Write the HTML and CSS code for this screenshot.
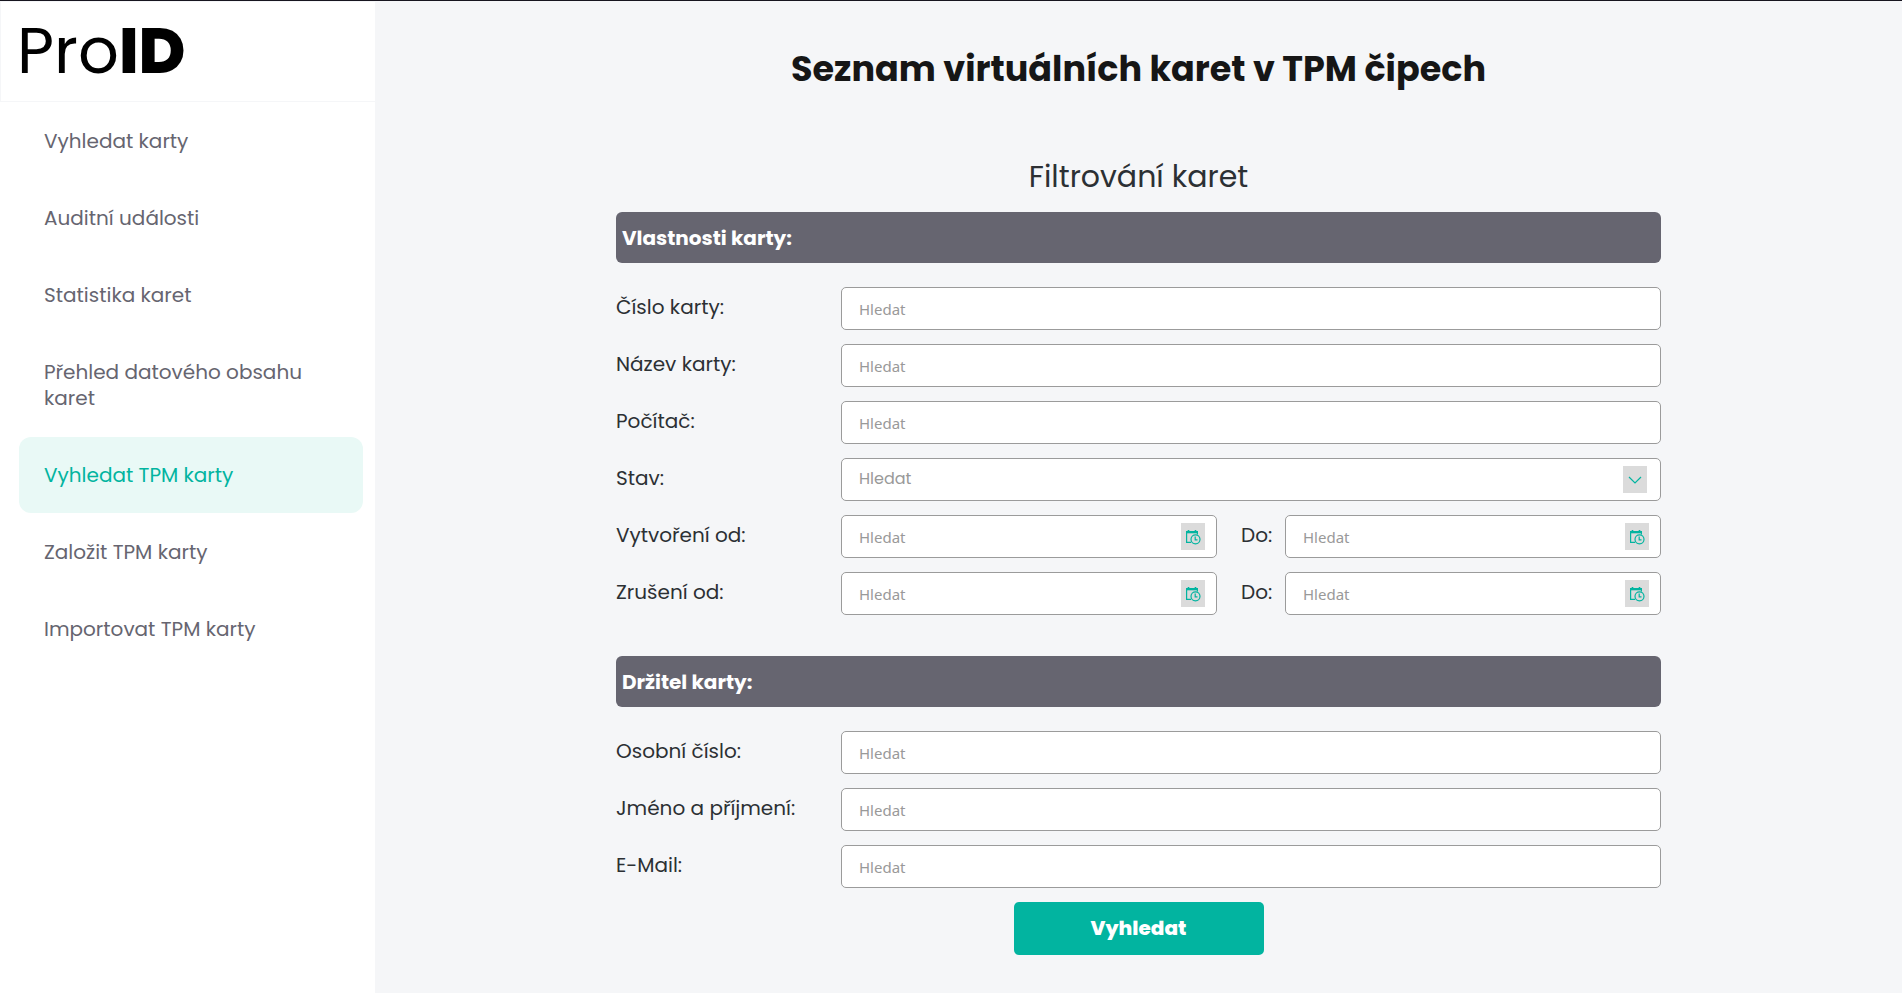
FILE: index.html
```html
<!DOCTYPE html>
<html lang="cs">
<head>
    <meta charset="UTF-8">
    <meta name="viewport" content="width=device-width, initial-scale=1.0">
    <title>ProID</title>
    <link rel="stylesheet" href="styles.css">
</head>
<body>
    <svg class="symbols" aria-hidden="true">
        <symbol id="icon-calendar" viewBox="0 0 16 16">
            <path d="M6 13.400H1.600V3.500h10.800v2" fill="none" stroke="currentColor" stroke-width="1.200"/>
            <path d="M1 2h12v2.300H1z" fill="currentColor"/>
            <path d="M3.500 1v2M10.500 1v2" stroke="currentColor" stroke-width="1.6"/>
            <circle cx="10.500" cy="10.300" r="4.500" fill="#dbdbdb" stroke="currentColor" stroke-width="1.200"/>
            <path d="M10.200 7.500v3.300h2.300" fill="none" stroke="currentColor" stroke-width="1.200"/>
        </symbol>
    </svg>
    <div class="app">
        <aside class="sidebar">
            <div class="logo">Pro<b>ID</b></div>
            <nav class="menu">
                <a href="#">Vyhledat karty</a>
                <a href="#">Auditní události</a>
                <a href="#">Statistika karet</a>
                <a href="#">Přehled datového obsahu karet</a>
                <a href="#" class="active">Vyhledat TPM karty</a>
                <a href="#">Založit TPM karty</a>
                <a href="#">Importovat TPM karty</a>
            </nav>
        </aside>
        <main class="content">
            <h1>Seznam virtuálních karet v TPM čipech</h1>
            <form class="filter">
                <h2>Filtrování karet</h2>

                <h3>Vlastnosti karty:</h3>
                <div class="rows">
                    <div class="row">
                        <label for="card-number">Číslo karty:</label>
                        <input type="text" id="card-number" placeholder="Hledat">
                    </div>
                    <div class="row">
                        <label for="card-name">Název karty:</label>
                        <input type="text" id="card-name" placeholder="Hledat">
                    </div>
                    <div class="row">
                        <label for="computer">Počítač:</label>
                        <input type="text" id="computer" placeholder="Hledat">
                    </div>
                    <div class="row">
                        <label for="state">Stav:</label>
                        <div class="field">
                            <select id="state">
                                <option value="">Hledat</option>
                            </select>
                            <span class="field-icon">
                                <svg viewBox="0 0 16 16"><path d="M2 5l6 6 6-6" fill="none" stroke="currentColor" stroke-width="1.2"/></svg>
                            </span>
                        </div>
                    </div>
                    <div class="row">
                        <label for="created-from">Vytvoření od:</label>
                        <div class="range">
                            <div class="field">
                                <input type="text" id="created-from" placeholder="Hledat">
                                <button type="button" class="field-icon" aria-label="Kalendář"><svg><use href="#icon-calendar"/></svg></button>
                            </div>
                            <label for="created-to">Do:</label>
                            <div class="field">
                                <input type="text" id="created-to" placeholder="Hledat">
                                <button type="button" class="field-icon" aria-label="Kalendář"><svg><use href="#icon-calendar"/></svg></button>
                            </div>
                        </div>
                    </div>
                    <div class="row">
                        <label for="revoked-from">Zrušení od:</label>
                        <div class="range">
                            <div class="field">
                                <input type="text" id="revoked-from" placeholder="Hledat">
                                <button type="button" class="field-icon" aria-label="Kalendář"><svg><use href="#icon-calendar"/></svg></button>
                            </div>
                            <label for="revoked-to">Do:</label>
                            <div class="field">
                                <input type="text" id="revoked-to" placeholder="Hledat">
                                <button type="button" class="field-icon" aria-label="Kalendář"><svg><use href="#icon-calendar"/></svg></button>
                            </div>
                        </div>
                    </div>
                </div>

                <h3>Držitel karty:</h3>
                <div class="rows">
                    <div class="row">
                        <label for="personal-number">Osobní číslo:</label>
                        <input type="text" id="personal-number" placeholder="Hledat">
                    </div>
                    <div class="row">
                        <label for="full-name">Jméno a příjmení:</label>
                        <input type="text" id="full-name" placeholder="Hledat">
                    </div>
                    <div class="row">
                        <label for="email">E-Mail:</label>
                        <input type="text" id="email" placeholder="Hledat">
                    </div>
                </div>

                <button type="submit" class="submit">Vyhledat</button>
            </form>
        </main>
    </div>
</body>
</html>
```
FILE: styles.css
```css
* {
    box-sizing: border-box;
}

body {
    margin: 0;
    font-family: Poppins, Inter, sans-serif;
    font-size: 20px;
    color: #2c3034;
    background-color: #f5f6f8;
}

.symbols {
    display: none;
}

.app {
    display: flex;
    min-height: 100vh;
    border-top: 1px solid #17151f;
}

/* sidebar */

.sidebar {
    flex: 0 0 375px;
    background-color: #fff;
}

.logo {
    padding: 13px 16px 15px;
    border: 1px solid #f5f6f8;
    border-width: 1px 0 1px 1px;
    font-size: 64px;
    line-height: 71px;
    color: #000;
}

.logo b {
    font-weight: 800;
}

.menu {
    display: flex;
    flex-direction: column;
    gap: 1px;
    padding: 1px 12px 0 19px;
}

.menu a {
    padding: 25px;
    border-radius: 12px;
    line-height: 26px;
    color: #666570;
    text-decoration: none;
}

.menu a.active {
    background-color: #e9f9f6;
    color: #02b4a0;
}

/* content */

.content {
    flex: 1;
    padding: 41px 24px;
}

h1 {
    margin: 0;
    font-size: 35px;
    line-height: 54px;
    font-weight: 700;
    color: #161616;
    text-align: center;
}

.filter {
    max-width: 1045px;
    margin: 58px auto 0;
}

h2 {
    margin: 0 0 12px;
    font-size: 30px;
    line-height: 46px;
    font-weight: 400;
    text-align: center;
}

h3 {
    margin: 0;
    padding: 13px 6px 11px;
    border-radius: 6px;
    font-size: 20px;
    line-height: 27px;
    font-weight: 700;
    color: #fff;
    background-color: #666570;
}

.rows {
    display: flex;
    flex-direction: column;
    gap: 14px;
    padding: 24px 0 14px;
}

.rows + h3 {
    margin-top: 27px;
}

.row {
    display: grid;
    grid-template-columns: 225px 1fr;
    align-items: center;
}

label {
    padding-bottom: 3px;
}

input,
select {
    width: 100%;
    height: 43px;
    padding: 0 17px;
    border: 1px solid #9b9b9b;
    border-radius: 5px;
    font-family: "Noto Sans", sans-serif;
    font-size: 15px;
    color: #212529;
    background-color: #fff;
}

input::placeholder {
    color: #999;
}

select {
    appearance: none;
    padding-bottom: 3px;
    font-family: Poppins, Inter, sans-serif;
    font-size: 16px;
    color: #999;
}

.range {
    display: grid;
    grid-template-columns: 1fr 68px 1fr;
    align-items: center;
}

.range label {
    padding-left: 24px;
}

.field {
    position: relative;
}

.field-icon {
    position: absolute;
    top: 8px;
    right: 12px;
    display: flex;
    align-items: center;
    justify-content: center;
    width: 24px;
    height: 27px;
    padding: 0;
    border: none;
    color: #02b4a0;
    background-color: #dbdbdb;
}

button.field-icon {
    cursor: pointer;
}

select + .field-icon {
    right: 14px;
    pointer-events: none;
}

.field-icon svg {
    width: 16px;
    height: 16px;
}

.submit {
    display: block;
    width: 250px;
    margin: 0 auto;
    padding: 13px;
    border: none;
    border-radius: 5px;
    font-family: Poppins, Inter, sans-serif;
    font-size: 20px;
    line-height: 27px;
    font-weight: 800;
    color: #fff;
    background-color: #02b4a0;
    cursor: pointer;
}
```
